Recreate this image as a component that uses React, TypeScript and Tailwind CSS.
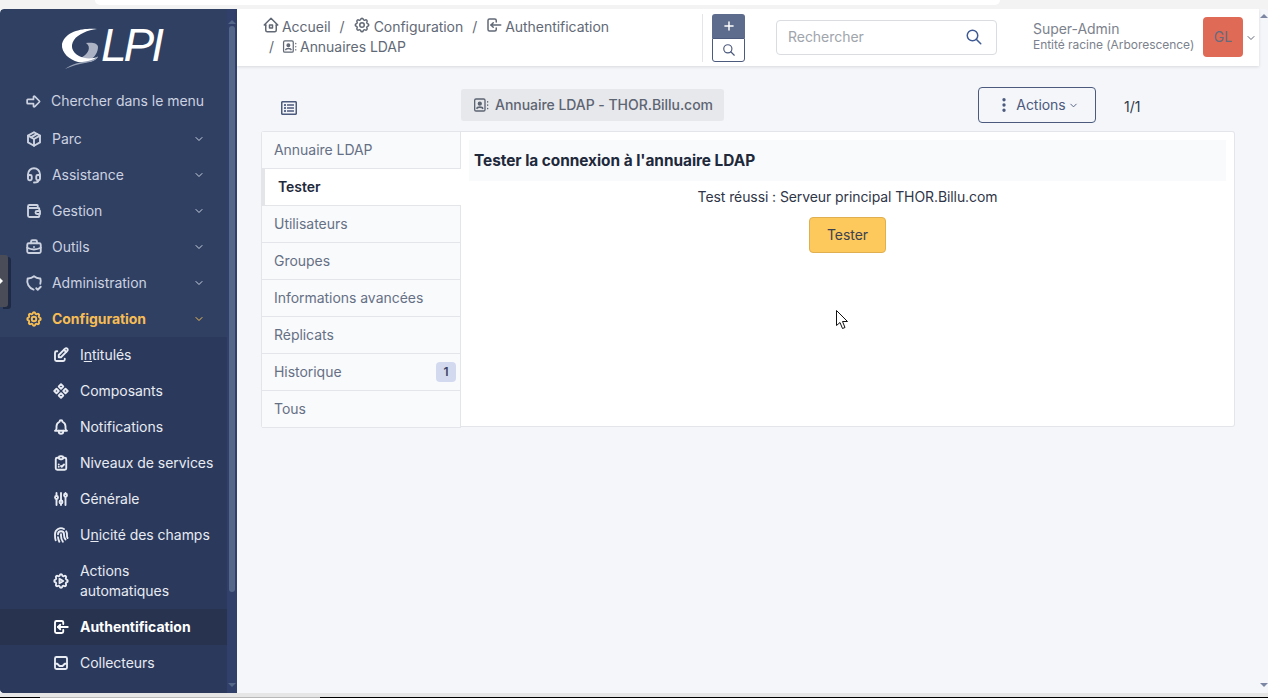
import React from 'react';
import {
    TbAdjustments, TbArrowBigRight, TbBell, TbBriefcase, TbCheckupList, TbChevronDown,
    TbComponents, TbDotsVertical, TbEdit, TbFingerprint, TbHeadset, TbHome2, TbInbox, TbLogin,
    TbPackage, TbPlus, TbSearch, TbSettings, TbSettingsAutomation, TbShieldCheck, TbWallet,
} from 'react-icons/tb';
import { FaRegListAlt } from 'react-icons/fa';

const MAIN_MENU = [
    { label: 'Parc', icon: TbPackage },
    { label: 'Assistance', icon: TbHeadset },
    { label: 'Gestion', icon: TbWallet },
    { label: 'Outils', icon: TbBriefcase },
    { label: 'Administration', icon: TbShieldCheck },
];

const TABS = ['Annuaire LDAP', 'Tester', 'Utilisateurs', 'Groupes', 'Informations avancées', 'Réplicats', 'Historique', 'Tous'];

// Address book with the tabs on the right, the package one has them on the left
const LdapIcon: React.FC<{ size: number; className?: string }> = ({ size, className }) => (
    <svg width={size} height={size} viewBox="0 0 24 24" fill="none" stroke="currentColor" strokeWidth="2" strokeLinecap="round" className={className}>
        <rect x="2.5" y="3" width="15.5" height="18" rx="2" />
        <circle cx="10.2" cy="10" r="2.2" fill="currentColor" />
        <path d="M6 17C6.5 14.5 14 14.5 14.5 17" strokeWidth="2.4" />
        <path d="M22 7V7.5M22 12V12.5M22 17V17.5" />
    </svg>
);

const SubItem: React.FC<{ icon: React.ElementType; active?: boolean; children: React.ReactNode }> = ({ icon: Icon, active, children }) => (
    <div className={`flex items-center pl-[52px] py-2 min-h-9 leading-5 ${active ? 'bg-[#27334f] font-bold text-white' : 'text-[#e8ebf2]'}`}>
        <Icon size={18} strokeWidth={2.5} className="shrink-0 mr-[10px]" />
        <span>{children}</span>
    </div>
);

// Logo: swoosh of the G is a drawing, the rest is text
const Logo = () => (
    <div className="h-[74px] flex items-start pl-[60px] pt-[17px] text-white">
        <svg width="42" height="46" viewBox="60 26 42 46" className="shrink-0">
            <path d="M86 43C92 42 98 43 98 47C98 52 95 57 90 60L80 58C88 55 92 47 86 43Z" fill="#aab2c4" />
            <path d="M97 29C85 28 66 30 62 44C61 53 70 60 78 62C86 63 94 62 98 57C92 59 84 59 79 56C72 52 70 46 74 40C78 34 88 30 97 29Z" fill="#fff" />
            <path d="M65 69C72 64 80 62 88 61C93 60 96 58 98 56C97 60 92 62 85 63C78 64 72 66 65 69Z" fill="#98a2b6" />
        </svg>
        <span className="font-['Liberation_Sans',sans-serif] italic text-[46px] leading-[46px] tracking-[-3px] -ml-[1px] -mt-[4px]">LPI</span>
    </div>
);

const Sidebar = () => (
    <aside className="w-[237px] shrink-0 flex bg-[#304063] rounded-tl-[4px] rounded-bl-[4px] overflow-hidden">
        <div className="w-[227px] shrink-0 flex flex-col">
            <Logo />
            <div className="h-9 flex items-center pl-[25px] text-[#ccd2e0]">
                <TbArrowBigRight size={17} strokeWidth={2.4} className="mr-[9px]" />
                Chercher dans le menu
            </div>
            <div className="h-[2px] shrink-0" />
            {MAIN_MENU.map(({ label, icon: Icon }) => (
                <div key={label} className="h-9 shrink-0 flex items-center pl-[25px] pr-[22px] text-[#ccd2e0]">
                    <Icon size={18} strokeWidth={2.5} className="mr-[9px]" />
                    <span className="flex-1">{label}</span>
                    <TbChevronDown size={12} />
                </div>
            ))}
            <div className="h-9 shrink-0 flex items-center pl-[25px] pr-[22px] font-bold text-[#f6bd54]">
                <TbSettings size={18} strokeWidth={2.5} className="mr-[9px]" />
                <span className="flex-1">Configuration</span>
                <TbChevronDown size={12} />
            </div>
            <div className="flex-1 bg-[#2b3a5c]">
                <SubItem icon={TbEdit}>I<u>n</u>titulés</SubItem>
                <SubItem icon={TbComponents}>Composants</SubItem>
                <SubItem icon={TbBell}>Notifications</SubItem>
                <SubItem icon={TbCheckupList}>Niveaux de services</SubItem>
                <SubItem icon={TbAdjustments}>Générale</SubItem>
                <SubItem icon={TbFingerprint}>U<u>n</u>icité des champs</SubItem>
                <SubItem icon={TbSettingsAutomation}>Actions<br />automatiques</SubItem>
                <SubItem icon={TbLogin} active>Authentification</SubItem>
                <SubItem icon={TbInbox}>Collecteurs</SubItem>
            </div>
        </div>
        <div className="w-[10px] shrink-0 flex flex-col items-center bg-[#31406a] pt-[11px]">
            <div className="w-0 h-0 border-x-[4px] border-x-transparent border-b-[4px] border-b-[#556789]" />
            <div className="w-[6px] h-[566px] mt-[2px] rounded-full bg-[#556789]" />
            <div className="mt-auto mb-[6px] w-0 h-0 border-x-[4px] border-x-transparent border-t-[4px] border-t-[#556789]" />
        </div>
    </aside>
);

const Header = () => (
    <header className="h-[57px] shrink-0 bg-white shadow-[0_1px_3px_rgba(0,0,0,0.12)] flex items-center">
        <div className="w-[466px] h-[48px] shrink-0 pl-[25px] pt-[3px] border-r border-[#e3e5e8] text-[#626976] leading-5">
            <div className="flex items-center h-5">
                <TbHome2 size={18} className="mr-[2px] -mt-1" />
                <span>Accueil</span>
                <span className="ml-[9px] mr-[8px]">/</span>
                <TbSettings size={18} className="mr-[3px] -mt-1" />
                <span>Configuration</span>
                <span className="ml-[9px] mr-[8px]">/</span>
                <TbLogin size={18} className="mr-[2px] -mt-1" />
                <span>Authentification</span>
            </div>
            <div className="flex items-center h-5 pl-[7px]">
                <span className="mr-[8px]">/</span>
                <LdapIcon size={15} className="mr-[3px]" />
                <span>Annuaires LDAP</span>
            </div>
        </div>
        <div className="w-[33px] ml-[9px] shrink-0 flex flex-col">
            <div className="h-[24px] bg-[#5d6b8d] rounded-t-[3px] flex items-center justify-center text-white">
                <TbPlus size={14} strokeWidth={2.5} />
            </div>
            <div className="h-[24px] border border-[#4c5a7d] rounded-b-[3px] flex items-center justify-center text-[#4c5a7d]">
                <TbSearch size={14} />
            </div>
        </div>
        <div className="w-[221px] h-[35px] ml-[31px] -mt-px shrink-0 border border-[#dadcdf] rounded-[4px] flex items-center justify-between pl-[11px] pr-[13px]">
            <span className="text-[#a0a5ac]">Rechercher</span>
            <TbSearch size={18} className="text-[#3f5a94]" />
        </div>
        <div className="ml-[36px] -mt-px flex-1 leading-4 text-[#7c828d]">
            <div>Super-Admin</div>
            <div className="text-xs">Entité racine (Arborescence)</div>
        </div>
        <div className="w-10 h-10 -mt-px shrink-0 rounded-[4px] bg-[#df6a55] flex items-center justify-center text-[#646b7f]">GL</div>
        <TbChevronDown size={12} className="ml-[2px] mr-[2px] text-[#626976]" />
    </header>
);

const TabsCard = () => (
    <div className="mt-2 ml-[24px] mr-[24px] h-[297px] flex">
        <nav className="w-[200px] shrink-0 flex flex-col rounded-l-[3px] border-l border-t border-[#e3e5ea]">
            {TABS.map((tab) => {
                if (tab === 'Tester') {
                    return (
                        <div key={tab} className="h-[37px] shrink-0 flex items-center bg-white border-l-4 border-b border-[#e3e5e8] -ml-px pl-[13px] font-semibold text-[#1e293b]">
                            {tab}
                        </div>
                    );
                }
                return (
                    <div key={tab} className="h-[37px] shrink-0 flex items-center justify-between bg-[#f9fafc] border-b border-r border-[#e3e5ea] pl-3 pr-1 text-[#667085]">
                        {tab}
                        {tab === 'Historique' && (
                            <span className="w-5 h-5 rounded-[4px] bg-[#d3daf0] flex items-center justify-center text-xs font-semibold text-[#3b4560]">1</span>
                        )}
                    </div>
                );
            })}
        </nav>
        <section className="flex-1 h-[296px] bg-white border-y border-r border-[#e3e5ea] rounded-r-[3px] pt-2 px-2 flex flex-col items-center">
            <h2 className="w-full h-[41px] shrink-0 bg-[#f9fafc] flex items-center pl-[5px] text-[15.4px] font-bold text-[#1e293b]">
                Tester la connexion à l'annuaire LDAP
            </h2>
            <p className="mt-[6px] leading-5 tracking-[-0.09px] text-[#2f3648]">Test réussi : Serveur principal THOR.Billu.com</p>
            <button className="mt-[10px] w-[77px] h-9 bg-[#fdc85c] border border-[#e0b050] rounded-[4px] text-[#3c4250]">Tester</button>
        </section>
    </div>
);

export default function App() {
    return (
        <div className="w-[1268px] h-[698px] overflow-hidden relative flex flex-col bg-[#f3f3f3] font-['Inter',sans-serif] text-sm tracking-[-0.04px]">
            <div className="h-[9px] shrink-0">
                <div className="ml-[95px] w-[905px] h-[5px] bg-white rounded-b-[8px]" />
            </div>
            <div className="h-[684px] shrink-0 flex bg-[#f4f6fa] rounded-[4px] overflow-hidden">
                <Sidebar />
                <main className="flex-1 min-w-0 flex flex-col">
                    <Header />
                    <div className="h-[36px] mt-[21px] shrink-0 flex items-center">
                        <div className="w-[224px] pl-[44px] shrink-0 pt-[6px]">
                            <FaRegListAlt size={16} className="text-[#4c5a7d]" />
                        </div>
                        <div className="h-8 w-[263px] shrink-0 rounded-[3px] bg-[#e6e8ec] flex items-center pl-3 font-medium text-[#5d6472]">
                            <LdapIcon size={16} className="mr-[6px]" />
                            Annuaire LDAP - THOR.Billu.com
                        </div>
                        <button className="ml-[254px] w-[118px] h-9 shrink-0 rounded-[4px] border border-[#4c5a7d] flex items-center justify-center text-[#4c5a7d]">
                            <TbDotsVertical size={18} strokeWidth={2.5} className="mr-[3px]" />
                            Actions
                            <TbChevronDown size={11} className="ml-[2px]" />
                        </button>
                        <span className="ml-[28px] pt-[4px] text-[#2f3648]">1/1</span>
                    </div>
                    <TabsCard />
                </main>
                <div className="w-[9px] shrink-0 flex flex-col items-center justify-between pt-[5px] pb-[6px]">
                    <div className="w-0 h-0 border-x-[4px] border-x-transparent border-b-[4px] border-b-[#7d87a3]" />
                    <div className="w-0 h-0 border-x-[4px] border-x-transparent border-t-[4px] border-t-[#7d87a3]" />
                </div>
            </div>
            <div className="h-[5px] shrink-0 bg-[#e6e6e6] flex items-end">
                <div className="w-[40px] h-px bg-black" />
                <div className="w-[280px] h-px bg-[#b8b8b8]" />
                <div className="flex-1 h-px bg-black" />
            </div>

            {/* collapse handle and mouse pointer sit over the page */}
            <div className="absolute left-0 top-[255px] w-[8px] h-[52px] bg-[#4a4d57] rounded-r-[3px] shadow-[3px_2px_0_#1e2a44] flex items-center">
                <div className="w-0 h-0 border-y-[3px] border-y-transparent border-l-[3px] border-l-white" />
            </div>
            <svg className="absolute left-[836px] top-[310px]" width="13" height="20" viewBox="0 0 13 20">
                <path d="M0.5 0.5V15.5L4 12.5L6.5 18.5L9 17.5L6.5 11.5H11.5Z" fill="#fff" stroke="#111" strokeWidth="1" />
            </svg>
        </div>
    );
}
